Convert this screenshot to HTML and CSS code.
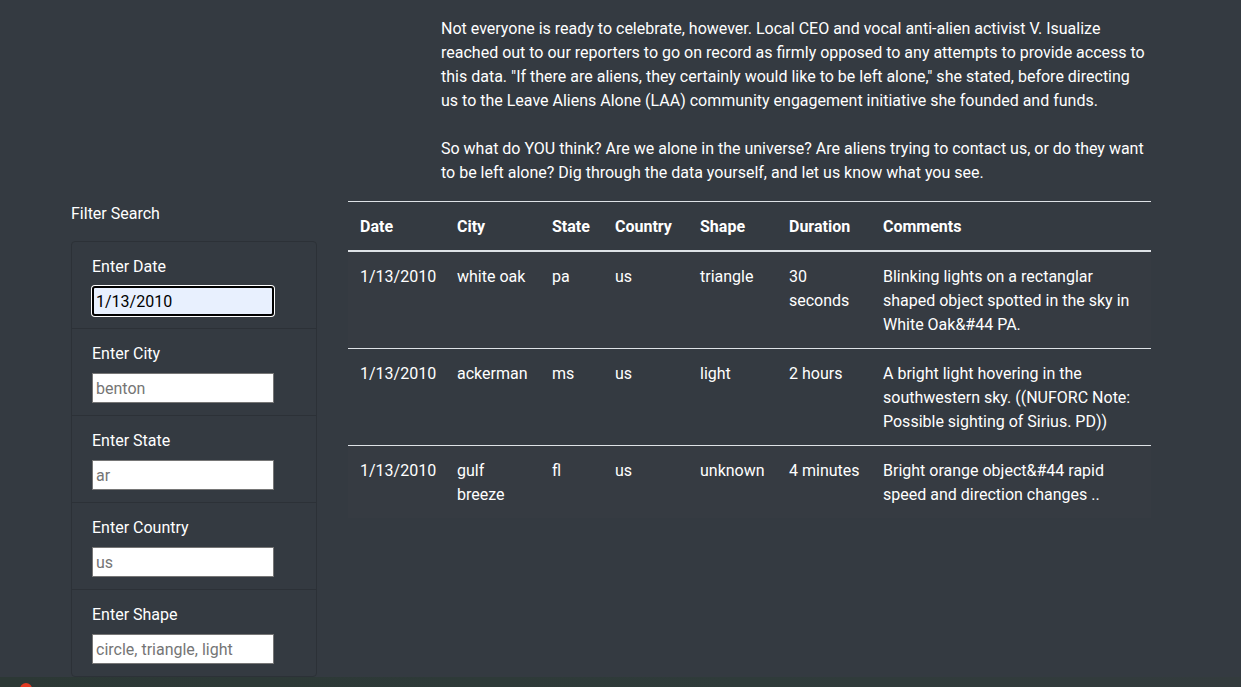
FILE: index.html
```html
<!DOCTYPE html>
<html lang="en">
<head>
<meta charset="utf-8">
<title>UFO Sightings</title>
<link rel="stylesheet" href="styles.css">
</head>
<body>
<main class="page">
  <section class="story">
    <p>Not everyone is ready to celebrate, however. Local CEO and vocal anti-alien activist V. Isualize reached out to our reporters to go on record as firmly opposed to any attempts to provide access to this data. "If there are aliens, they certainly would like to be left alone," she stated, before directing us to the Leave Aliens Alone (LAA) community engagement initiative she founded and funds.</p>
    <p>So what do YOU think? Are we alone in the universe? Are aliens trying to contact us, or do they want to be left alone? Dig through the data yourself, and let us know what you see.</p>
  </section>
  <div class="content">
    <aside class="filters">
      <div class="filters-title">Filter Search</div>
      <ul class="filter-list">
        <li class="filter-item">
          <label class="filter-label" for="datetime">Enter Date</label>
          <input class="filter-input is-focused" id="datetime" type="text" value="1/13/2010">
        </li>
        <li class="filter-item">
          <label class="filter-label" for="city">Enter City</label>
          <input class="filter-input" id="city" type="text" placeholder="benton">
        </li>
        <li class="filter-item">
          <label class="filter-label" for="state">Enter State</label>
          <input class="filter-input" id="state" type="text" placeholder="ar">
        </li>
        <li class="filter-item">
          <label class="filter-label" for="country">Enter Country</label>
          <input class="filter-input" id="country" type="text" placeholder="us">
        </li>
        <li class="filter-item">
          <label class="filter-label" for="shape">Enter Shape</label>
          <input class="filter-input" id="shape" type="text" placeholder="circle, triangle, light">
        </li>
      </ul>
    </aside>
    <div class="results">
      <table class="ufo-table">
        <colgroup>
          <col class="c-date"><col class="c-city"><col class="c-state"><col class="c-country"><col class="c-shape"><col class="c-duration"><col class="c-comments">
        </colgroup>
        <thead>
          <tr><th>Date</th><th>City</th><th>State</th><th>Country</th><th>Shape</th><th>Duration</th><th>Comments</th></tr>
        </thead>
        <tbody>
          <tr class="striped"><td>1/13/2010</td><td>white oak</td><td>pa</td><td>us</td><td>triangle</td><td class="duration">30 seconds</td><td>Blinking lights on a rectanglar shaped object spotted in the sky in White Oak&amp;#44 PA.</td></tr>
          <tr><td>1/13/2010</td><td>ackerman</td><td>ms</td><td>us</td><td>light</td><td class="duration">2 hours</td><td>A bright light hovering in the southwestern sky. ((NUFORC Note: Possible sighting of Sirius. PD))</td></tr>
          <tr class="striped"><td>1/13/2010</td><td>gulf breeze</td><td>fl</td><td>us</td><td>unknown</td><td class="duration">4 minutes</td><td>Bright orange object&amp;#44 rapid speed and direction changes ..</td></tr>
        </tbody>
      </table>
    </div>
  </div>
  <footer class="strip"><span class="strip-dot"></span></footer>
</main>
</body>
</html>
```
FILE: styles.css
```css
* { box-sizing: border-box; }
html, body { margin: 0; padding: 0; }
body {
  background: #343a41;
  color: #fff;
  font-family: Roboto, "Liberation Sans", sans-serif;
  font-size: 16px;
  line-height: 24px;
  height: 687px;
  overflow: hidden;
}
.page { display: flex; flex-direction: column; min-height: 687px; }
.story { padding: 17px 0 0 441px; width: 1148px; }
.story p { margin: 0 0 24px; }
.story p:last-child { margin-bottom: 16px; }
.content { display: flex; gap: 31px; padding-left: 71px; }
.filters { width: 246px; flex: none; }
.filters-title { padding-top: 1px; margin-bottom: 15px; }
.filter-list {
  list-style: none; margin: 0; padding: 0;
  border: 1px solid #2c3137; border-radius: 4px;
}
.filter-item {
  padding: 13px 20px 11px;
  border-top: 1px solid #2c3137;
  height: 87px;
}
.filter-item:first-child { border-top: 0; height: 86px; }
.filter-label { display: block; margin-bottom: 7px; }
.filter-input {
  display: block;
  width: 182px; height: 30px;
  border: 1px solid #767676;
  background: #fff;
  font: 16px Roboto, "Liberation Sans", sans-serif;
  color: #000;
  padding: 1px 3px;
  outline: none;
}
.filter-input::placeholder { color: #757575; }
.filter-input.is-focused {
  background: #e8f0fe;
  border: 2px solid #000;
  border-radius: 3px;
  box-shadow: 0 0 0 1px #fff;
  padding: 0 2px;
}
.results { width: 803px; flex: none; }
.ufo-table { width: 803px; border-collapse: collapse; table-layout: fixed; }
.c-date { width: 97px; }
.c-city { width: 95px; }
.c-state { width: 63px; }
.c-country { width: 85px; }
.c-shape { width: 89px; }
.c-duration { width: 94px; }
.c-comments { width: 280px; }
.ufo-table th, .ufo-table td {
  padding: 13px 12px 11px; text-align: left; vertical-align: top;
  border-top: 1px solid #dee2e6;
}
.ufo-table td.duration { padding-right: 8px; }
.ufo-table thead th { border-bottom: 2px solid #dee2e6; font-weight: 700; }
.ufo-table tbody tr:first-child td { border-top: 0; }
.striped { background: #363b42; }
.strip {
  margin-top: auto;
  height: 10px;
  background: linear-gradient(90deg, #2c3835, #2f3b3a 60%, #333b3d);
  position: relative;
}
.strip-dot {
  position: absolute; left: 20px; top: 6px;
  width: 12px; height: 8px; border-radius: 6px 6px 0 0;
  background: #e23a22;
}
```
